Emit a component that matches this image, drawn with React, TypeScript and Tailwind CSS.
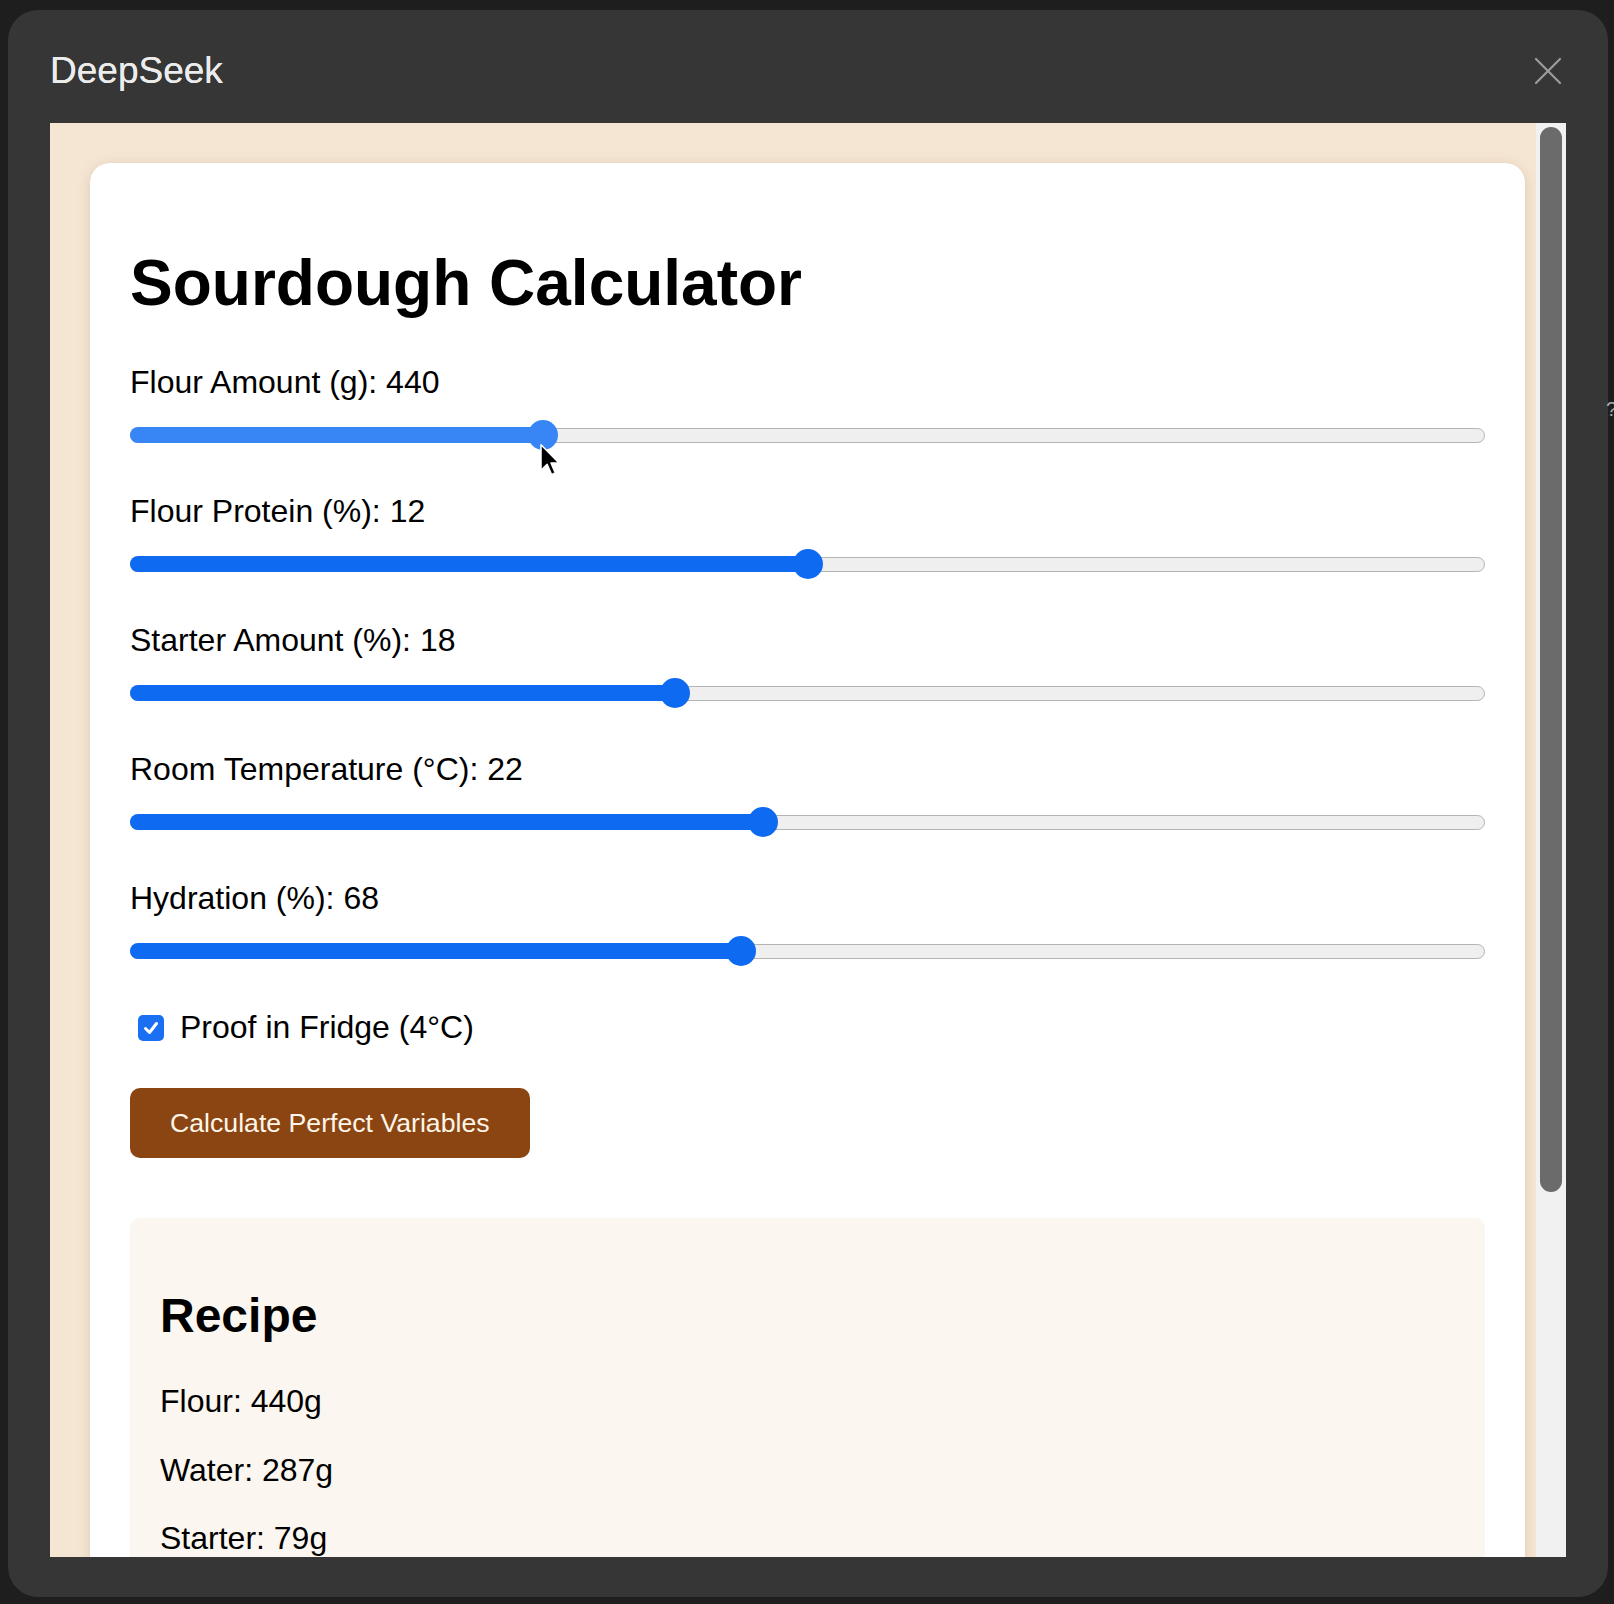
import { X } from 'lucide-react';

interface SliderRow {
  label: string;
  value: number;
  min: number;
  max: number;
  hover?: boolean;
}

const sliders: SliderRow[] = [
  { label: 'Flour Amount (g)', value: 440, min: 200, max: 1000, hover: true },
  { label: 'Flour Protein (%)', value: 12, min: 8, max: 16 },
  { label: 'Starter Amount (%)', value: 18, min: 10, max: 30 },
  { label: 'Room Temperature (°C)', value: 22, min: 15, max: 30 },
  { label: 'Hydration (%)', value: 68, min: 50, max: 90 },
];

function RangeSlider ({ row }: { row: SliderRow }) {
  const f = (row.value - row.min) / (row.max - row.min);
  const blue = row.hover ? 'bg-[#3886f6]' : 'bg-[#0f6af2]';

  return (
    <div className="mb-[38px]">
      <label className="block text-[32px] leading-[37px] text-black">
        {row.label}: {row.value}
      </label>
      <div className="relative mt-[14px] h-[40px]">
        {/* track */}
        <div className="absolute left-0 right-0 top-[13px] h-[15px] rounded-full border border-[#b4b4b4] bg-[#efefef]" />
        {/* filled part */}
        <div
          className={`absolute left-0 top-[12px] h-[16px] rounded-full ${blue}`}
          style={{ width: `calc(${f} * (100% - 30px) + 15px)` }}
        />
        {/* thumb */}
        <div
          className={`absolute top-[5px] h-[30px] w-[30px] rounded-full ${blue}`}
          style={{ left: `calc(${f} * (100% - 30px))` }}
        />
      </div>
    </div>
  );
}

export default function App () {
  return (
    <div
      className="relative h-[1604px] w-[1614px] overflow-hidden bg-[#1e1e1e] pl-[8px] pt-[10px]"
      style={{ fontFamily: '"Liberation Sans", Arial, sans-serif' }}
    >
      {/* background hint behind the modal */}
      <span className="absolute left-[1606px] top-[398px] text-[20px] leading-[22px] text-[#a8a8a8]">?</span>

      <div className="flex h-[1587px] w-[1600px] flex-col rounded-[30px] bg-[#363636]">
        {/* Header */}
        <div className="flex h-[113px] shrink-0 items-center justify-between pl-[42px] pr-[36px] pt-[9px]">
          <span className="text-[37px] leading-[42px] text-[#ececec] [text-shadow:0_0_0.6px_#ececec]">DeepSeek</span>
          <X className="h-[48px] w-[48px] text-[#9c9c9c]" strokeWidth={1.1} />
        </div>

        {/* Frame */}
        <div className="mx-[42px] flex h-[1434px] overflow-hidden">
          <div className="h-full w-[1486px] overflow-hidden bg-[#f5e6d3] pl-[40px] pt-[40px]">
            <div className="h-[1400px] w-[1435px] rounded-t-[20px] bg-white px-[40px] pt-[40px] shadow-[0_2px_14px_rgba(120,80,50,0.18)]">
              <h1 className="mb-[44px] mt-[43px] text-[64px] font-bold leading-[74px] text-black">
                Sourdough Calculator
              </h1>

              {sliders.map((row) => (
                <RangeSlider key={row.label} row={row} />
              ))}

              {/* Fridge checkbox */}
              <div className="flex h-[37px] items-center">
                <span className="ml-[8px] flex h-[26px] w-[26px] items-center justify-center rounded-[5px] bg-[#1a6ff2]">
                  <svg viewBox="0 0 20 20" className="h-[20px] w-[20px]">
                    <polyline
                      points="4.5,10.5 8.5,14.5 15.5,5.5"
                      fill="none"
                      stroke="white"
                      strokeWidth="3"
                      strokeLinecap="round"
                      strokeLinejoin="round"
                    />
                  </svg>
                </span>
                <span className="ml-[16px] text-[32px] leading-[37px] text-black">Proof in Fridge (4°C)</span>
              </div>

              <button className="mt-[42px] h-[70px] rounded-[10px] bg-[#8b4513] px-[40px] text-[26.67px] leading-[30px] text-[#fdf6e8]">
                Calculate Perfect Variables
              </button>

              {/* Result */}
              <div className="mt-[60px] h-[400px] rounded-t-[10px] bg-[#fbf6ef] px-[30px] pt-[30px]">
                <h2 className="mb-[40px] mt-[40px] text-[48px] font-bold leading-[55px] text-black">Recipe</h2>
                <p className="mb-[32px] text-[32px] leading-[36.6px] text-black">Flour: 440g</p>
                <p className="mb-[32px] text-[32px] leading-[36.6px] text-black">Water: 287g</p>
                <p className="text-[32px] leading-[36.6px] text-black">Starter: 79g</p>
              </div>
            </div>
          </div>

          {/* Scrollbar */}
          <div className="h-full w-[30px] bg-[#f1f1f1] px-[4px] pt-[4px]">
            <div className="h-[1065px] w-full rounded-full bg-[#6b6b6b]" />
          </div>
        </div>
      </div>

      {/* mouse pointer */}
      <svg viewBox="0 0 12 20" className="absolute left-[539px] top-[443px] h-[34px] w-[21px]">
        <path
          d="M1 1 L1 16 L4.6 12.6 L7.2 18.6 L9.4 17.6 L6.9 11.8 L11.6 11.8 Z"
          fill="black"
          stroke="white"
          strokeWidth="0.9"
          strokeLinejoin="round"
        />
      </svg>
    </div>
  );
}
